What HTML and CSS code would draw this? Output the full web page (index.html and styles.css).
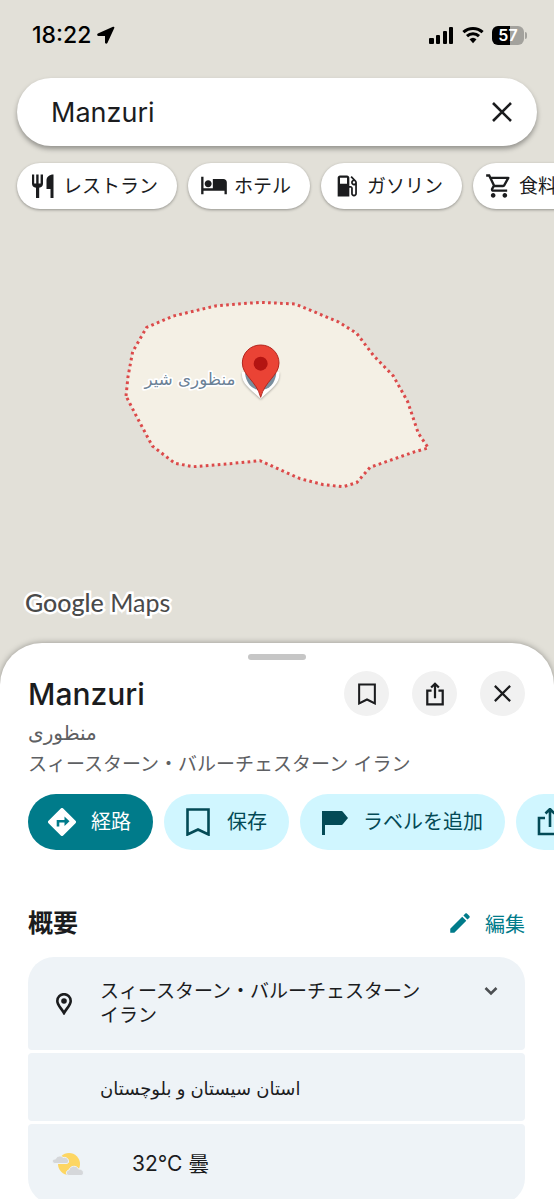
FILE: index.html
```
<!DOCTYPE html>
<html lang="ja">
<head>
    <meta charset="UTF-8">
    <meta name="viewport" content="width=device-width, initial-scale=1.0">
    <title>Manzuri - Google Maps</title>
    <link rel="stylesheet" href="styles.css">
</head>
<body>
    <div class="screen">
        <!-- Status bar -->
        <div class="status-bar">
            <div class="status-left">
                <span class="clock">18:22</span>
                <svg width="18" height="18" viewBox="0 0 18 18"><path d="M16 .8.9 7.600C-.2 8.200 0 10 1.300 10H8v6.500c0 1.400 1.800 1.600 2.400.4L17.300 2c.4-.9-.4-1.600-1.300-1.200z"/></svg>
            </div>
            <div class="status-right">
                <svg width="25" height="17" viewBox="0 0 25 17">
                    <rect x="0" y="11" width="5" height="6" rx="1"/>
                    <rect x="7" y="8" width="4" height="9" rx="1"/>
                    <rect x="14" y="4" width="4" height="13" rx="1"/>
                    <rect x="20" y="0" width="4" height="17" rx="1"/>
                </svg>
                <svg width="22" height="18" viewBox="0 0 22 18">
                    <path class="wifi-arc" d="M1.400 6.200a14 14 0 0 1 19.200 0M5 10.100a8.700 8.700 0 0 1 12 0"/>
                    <path d="M7.500 13.300a5.200 5.200 0 0 1 7 0L11 17.200z"/>
                </svg>
                <div class="battery"><span class="battery-level">57</span></div>
            </div>
        </div>

        <!-- Search -->
        <form class="search-box">
            <input class="search-input" type="text" value="Manzuri" aria-label="検索">
            <button class="clear-button" type="button" aria-label="消去">
                <svg width="20" height="20" viewBox="0 0 20 20"><path class="line" d="M1 1l18 18M19 1 1 19"/></svg>
            </button>
        </form>

        <div class="chips">
            <button class="chip">
                <svg width="28" height="28" viewBox="0 0 28 28"><path d="M3 2.500h2.200v9h2V2.500h2.400v9h2V2.500H14v9.300c0 2.200-1.500 3.700-3.800 4V26H7V15.800c-2.500-.3-4-1.800-4-4zM24.500 2.500V26h-3V17h-4V8.500c0-3.500 2.800-6 7-6z"/></svg>
                <span>レストラン</span>
            </button>
            <button class="chip">
                <svg width="28" height="28" viewBox="0 0 24 24"><path d="M7 13c1.660 0 3-1.340 3-3S8.660 7 7 7s-3 1.340-3 3 1.340 3 3 3zm13-7h-9v8H3V4H1v15h2v-3h18v3h2V9c0-1.700-1.300-3-3-3z"/></svg>
                <span>ホテル</span>
            </button>
            <button class="chip">
                <svg width="28" height="28" viewBox="0 0 24 24"><path d="M19.770 7.230l.01-.01-3.720-3.720L15 4.560l2.110 2.110c-.94.36-1.610 1.260-1.610 2.330 0 1.380 1.120 2.500 2.500 2.500.36 0 .69-.08 1-.21v7.210c0 .55-.45 1-1 1s-1-.45-1-1V14c0-1.100-.9-2-2-2h-1V5c0-1.100-.9-2-2-2H6c-1.100 0-2 .9-2 2v16h10v-7.500h1.500v5c0 1.380 1.120 2.500 2.500 2.500s2.500-1.120 2.500-2.500V9c0-.69-.28-1.320-.73-1.770zM12 10H6V5h6v5zm6 0c-.55 0-1-.45-1-1s.45-1 1-1 1 .45 1 1-.45 1-1 1z"/></svg>
                <span>ガソリン</span>
            </button>
            <button class="chip">
                <svg width="28" height="28" viewBox="0 0 24 24"><path d="M15.550 13c.75 0 1.410-.41 1.750-1.030l3.580-6.490A.996.996 0 0020.010 4H5.210l-.94-2H1v2h2l3.600 7.590-1.350 2.440C4.520 15.370 5.480 17 7 17h12v-2H7l1.100-2h7.450zM6.160 6h12.150l-2.760 5H8.530L6.160 6zM7 18c-1.100 0-1.990.9-1.990 2S5.900 22 7 22s2-.9 2-2-.9-2-2-2zm10 0c-1.100 0-1.990.9-1.990 2s.89 2 1.990 2 2-.9 2-2-.9-2-2-2z"/></svg>
                <span>食料品</span>
            </button>
        </div>

        <!-- Map -->
        <div class="map">
            <svg class="region" viewBox="0 0 1002 630">
                <path class="region-area" d="M48 318 54 260 68 185 110 112 190 78 320 47 450 37 556 42 686 96 740 130 790 196 850 258 893 335 925 430 955 474 915 485 780 532 740 578 700 590 640 584 570 566 450 512 360 521 250 530 195 520 127 468 80 380z"/>
                <path class="marker-back" d="M396 246c-3 34 20 46 56 80 36-34 59-46 56-80z"/>
                <path class="marker-poi" d="M405 250c4 30 20 50 47 50s43-20 47-50z"/>
                <path class="marker-pin" d="M452 165c-31 0-55 24-55 54 0 38 43 54 55 103 12-49 55-65 55-103 0-30-24-54-55-54z"/>
                <circle class="marker-dot" cx="452" cy="221" r="21"/>
                <text class="map-label" x="240" y="285" text-anchor="middle">منظوری شیر</text>
            </svg>
            <div class="map-logo"><span class="logo-google">Google</span> Maps</div>
        </div>

        <!-- Place sheet -->
        <div class="sheet">
            <div class="handle"></div>
            <div class="place-header">
                <h1 class="place-name">Manzuri</h1>
                <div class="header-buttons">
                    <button class="round-button" aria-label="保存">
                        <svg width="22" height="22" viewBox="0 0 28 28"><path class="line" d="M4 2h20v24l-10-5-10 5z"/></svg>
                    </button>
                    <button class="round-button" aria-label="共有">
                        <svg width="24" height="24" viewBox="0 0 28 28"><path class="line" d="M10 10H5v16h18V10h-5M14 19V2M9.500 6.500 14 2l4.500 4.500"/></svg>
                    </button>
                    <button class="round-button" aria-label="閉じる">
                        <svg width="17" height="17" viewBox="0 0 20 20"><path class="line" d="M1 1l18 18M19 1 1 19"/></svg>
                    </button>
                </div>
            </div>
            <div class="place-native" lang="fa">منظوری</div>
            <div class="place-region">スィースターン・バルーチェスターン イラン</div>

            <div class="actions">
                <button class="action primary">
                    <svg width="28" height="28" viewBox="0 0 28 28"><path d="M12.800.5.500 12.800a1.700 1.700 0 0 0 0 2.400l12.300 12.300a1.700 1.700 0 0 0 2.400 0l12.300-12.300a1.700 1.700 0 0 0 0-2.400L15.200.5a1.700 1.700 0 0 0-2.400 0z"/><path class="turn" d="M10 18.500v-5.300h8"/><path class="turn-head" d="M16.500 8.500v9.400l5-4.700z"/></svg>
                    <span>経路</span>
                </button>
                <button class="action">
                    <svg width="28" height="28" viewBox="0 0 28 28"><path class="line" d="M3.500 1.500h21v25L14 21.500l-10.500 5z"/></svg>
                    <span>保存</span>
                </button>
                <button class="action">
                    <svg width="28" height="28" viewBox="0 0 28 28"><path d="M2 3h19.500a1.500 1.500 0 0 1 1.300.7L28 10l-5.200 6.300a1.500 1.500 0 0 1-1.300.7H5v10H2z"/></svg>
                    <span>ラベルを追加</span>
                </button>
                <button class="action">
                    <svg width="28" height="28" viewBox="0 0 28 28"><path class="line" d="M9 10H3v16h22V10h-6M14 19V1M9.500 5.500 14 1l4.500 4.500"/></svg>
                    <span>共有</span>
                </button>
            </div>

            <div class="section-header">
                <h2 class="section-title">概要</h2>
                <a class="edit-link" href="#">
                    <svg width="26" height="26" viewBox="0 0 24 24"><path d="M3 17.250V21h3.750L17.810 9.940l-3.750-3.750L3 17.250zM20.710 7.040c.39-.39.39-1.020 0-1.410l-2.340-2.340c-.39-.39-1.020-.39-1.410 0l-1.830 1.830 3.750 3.750 1.830-1.830z"/></svg>
                    <span>編集</span>
                </a>
            </div>

            <div class="info-list">
                <div class="info-row address">
                    <svg class="info-icon" width="16" height="22" viewBox="0 0 16 22"><path class="line" d="M8 20C5.500 15.500 1.300 12 1.300 7.900a6.700 6.700 0 0 1 13.400 0C14.700 12 10.500 15.500 8 20z"/><circle cx="8" cy="8" r="2.800"/></svg>
                    <div class="info-text">スィースターン・バルーチェスターン<br>イラン</div>
                    <button class="expand-button" aria-label="詳細">
                        <svg width="14" height="14" viewBox="0 0 14 14"><path class="line" d="M1.500 4 7 9.500 12.500 4"/></svg>
                    </button>
                </div>
                <div class="info-row province">
                    <div class="info-text" lang="fa">استان سیستان و بلوچستان</div>
                </div>
                <div class="info-row weather">
                    <svg width="32" height="24" viewBox="0 0 32 24">
                        <circle cx="17" cy="12" r="11" fill="#fdd663"/>
                        <path d="M1 10.500c-1.500-2 .5-3.500 2.500-3.500C5 3.500 9 3 11 5.500c2.500-.5 5 .5 5.500 3s-1 3-2.500 3H3c-1 0-1.500-.3-2-1z" fill="#d5d7da" stroke="#eef3f7"/>
                        <path d="M17 23.500c-3.500 0-3.500-5 0-5.500 1-4.500 8-5 9.500-1 3.500 0 5 2 5 4 0 1.500-1 2.500-2.500 2.500z" fill="#d5d7da" stroke="#eef3f7"/>
                    </svg>
                    <div class="weather-text">32°C 曇</div>
                </div>
            </div>
        </div>
    </div>
</body>
</html>
```
FILE: styles.css
```
* {
    box-sizing: border-box;
}
body {
    margin: 0;
    font-family: Inter, "Noto Sans CJK JP", "DejaVu Sans", sans-serif;
    background: #e2e0d8;
    color: #1b1c1e;
}
button {
    font-family: inherit;
    border: none;
    padding: 0;
    color: inherit;
    cursor: pointer;
}
svg {
    display: block;
    flex: none;
    fill: currentColor;
}
.line {
    fill: none;
    stroke: currentColor;
    stroke-width: 2.6;
}
.screen {
    height: 100vh;
    display: flex;
    flex-direction: column;
    overflow: hidden;
}

/* Status bar */
.status-bar {
    display: flex;
    justify-content: space-between;
    align-items: center;
    padding: 20px 30px 28px 32px;
    color: #000;
}
.status-left {
    display: flex;
    align-items: center;
    gap: 6px;
}
.clock {
    font-size: 23px;
    line-height: 30px;
    font-weight: 500;
}
.status-right {
    display: flex;
    align-items: center;
    gap: 8px;
}
.wifi-arc {
    fill: none;
    stroke: currentColor;
    stroke-width: 3;
}
.battery {
    position: relative;
    width: 32px;
    height: 19px;
    border-radius: 6px;
    background: linear-gradient(90deg, #000 57%, #a3a29d 57%);
    color: #fff;
    text-align: center;
}
.battery::after {
    content: "";
    position: absolute;
    right: -3px;
    top: 6px;
    width: 2px;
    height: 7px;
    border-radius: 0 2px 2px 0;
    background: #a3a29d;
}
.battery-level {
    display: block;
    font-size: 16px;
    line-height: 19px;
    font-weight: 600;
}

/* Search */
.search-box {
    display: flex;
    align-items: center;
    height: 68px;
    flex: none;
    margin: 0 17px;
    padding: 0 17px 0 34px;
    border-radius: 34px;
    background: #fff;
    box-shadow: 0 3px 5px rgba(0,0,0,0.35);
}
.search-input {
    flex: 1;
    min-width: 0;
    padding: 0;
    border: none;
    outline: none;
    background: transparent;
    font-family: inherit;
    font-size: 27px;
    color: inherit;
}
.clear-button {
    display: flex;
    align-items: center;
    justify-content: center;
    width: 36px;
    height: 36px;
    background: transparent;
}
.chips {
    display: flex;
    flex: none;
    gap: 11px;
    padding: 17px 17px 16px;
    overflow-x: auto;
    scrollbar-width: none;
}
.chip {
    display: flex;
    align-items: center;
    flex: none;
    gap: 6px;
    height: 46px;
    padding: 0 19px 0 12px;
    border-radius: 23px;
    background: #fff;
    box-shadow: 0 1px 3px rgba(0,0,0,0.35);
    font-size: 19px;
    white-space: nowrap;
}
.chip span {
    padding-bottom: 3px;
}

/* Map */
.map {
    flex: none;
    padding: 65px 25px 25px;
}
.region {
    width: 334px;
    height: 210px;
    margin: 0 auto;
}
.region-area {
    fill: #f4f0e5;
    stroke: #dc4a4a;
    stroke-width: 9;
    stroke-dasharray: 8 10;
}
.marker-back {
    fill: #fff;
    filter: drop-shadow(0 3px 3px rgba(0,0,0,0.3));
}
.marker-poi {
    fill: #788e9e;
}
.marker-pin {
    fill: #ea4335;
    stroke: #b3261e;
    stroke-width: 3;
}
.marker-dot {
    fill: #b31412;
}
.map-label {
    font-family: "DejaVu Sans", sans-serif;
    font-size: 50px;
    fill: #6b8196;
    stroke: #fff;
    stroke-width: 10;
    stroke-linejoin: round;
    paint-order: stroke;
}
.map-logo {
    margin-top: 86px;
    font-family: Lato, sans-serif;
    font-size: 25px;
    line-height: 32px;
    color: #4a4a4a;
    -webkit-text-stroke: 5px #fff;
    paint-order: stroke fill;
}
.logo-google {
    font-weight: 500;
}

/* Place sheet */
.sheet {
    flex: 1;
    min-height: 0;
    padding: 11px 29px 0 28px;
    border-radius: 42px 42px 0 0;
    background: #fff;
    box-shadow: 0 0 6px rgba(0,0,0,0.35);
    overflow: hidden;
}
.handle {
    width: 58px;
    height: 6px;
    margin: 0 auto;
    border-radius: 3px;
    background: #c6c6c6;
}
.place-header {
    display: flex;
    justify-content: space-between;
    align-items: center;
    margin-top: 11px;
}
.place-name {
    margin: 0;
    font-size: 30px;
    line-height: 36px;
    font-weight: 500;
}
.header-buttons {
    display: flex;
    gap: 23px;
}
.round-button {
    display: flex;
    align-items: center;
    justify-content: center;
    width: 45px;
    height: 45px;
    border-radius: 50%;
    background: #f1f1f1;
}
.place-native {
    margin-top: 2px;
    font-size: 20px;
    line-height: 31px;
    color: #5e6063;
}
.place-region {
    font-size: 19px;
    line-height: 31px;
    color: #5e6063;
}
.actions {
    display: flex;
    gap: 11px;
    margin: 14px -29px 0 0;
    overflow-x: auto;
    scrollbar-width: none;
}
.action {
    display: flex;
    align-items: center;
    flex: none;
    gap: 15px;
    height: 56px;
    padding: 0 22px 0 20px;
    border-radius: 28px;
    background: #d0f6ff;
    color: #034a56;
    font-size: 20px;
    white-space: nowrap;
}
.action span {
    padding-bottom: 3px;
}
.action.primary {
    background: #007b8a;
    color: #fff;
}
.turn {
    fill: none;
    stroke: #007b8a;
    stroke-width: 2.6;
}
.turn-head {
    fill: #007b8a;
}

/* Overview */
.section-header {
    display: flex;
    justify-content: space-between;
    align-items: center;
    margin-top: 55px;
}
.section-title {
    margin: 0;
    font-size: 25px;
    line-height: 36px;
    font-weight: 700;
}
.edit-link {
    display: flex;
    align-items: center;
    gap: 12px;
    font-size: 20px;
    color: #007b8a;
    text-decoration: none;
}
.info-list {
    display: flex;
    flex-direction: column;
    gap: 3px;
    margin-top: 16px;
}
.info-row {
    display: flex;
    align-items: center;
    padding: 0 24px;
    border-radius: 4px;
    background: #eef3f7;
}
.info-row:first-child {
    border-radius: 26px 26px 4px 4px;
}
.info-row:last-child {
    border-radius: 4px 4px 26px 26px;
}
.info-text {
    font-size: 19px;
    line-height: 24px;
}
.address {
    height: 93px;
}
.address .info-text {
    flex: 1;
    margin-left: 28px;
}
.info-icon {
    margin-left: 4px;
}
.expand-button {
    display: flex;
    align-items: center;
    justify-content: center;
    align-self: flex-start;
    width: 20px;
    height: 24px;
    margin-top: 22px;
    background: transparent;
    color: #4c4f52;
}
.province {
    height: 68px;
    padding: 4px 24px 0 72px;
}
.province .info-text {
    font-size: 18px;
}
.weather {
    height: 80px;
    gap: 48px;
}
.weather-text {
    font-size: 21px;
    line-height: 28px;
}
```
